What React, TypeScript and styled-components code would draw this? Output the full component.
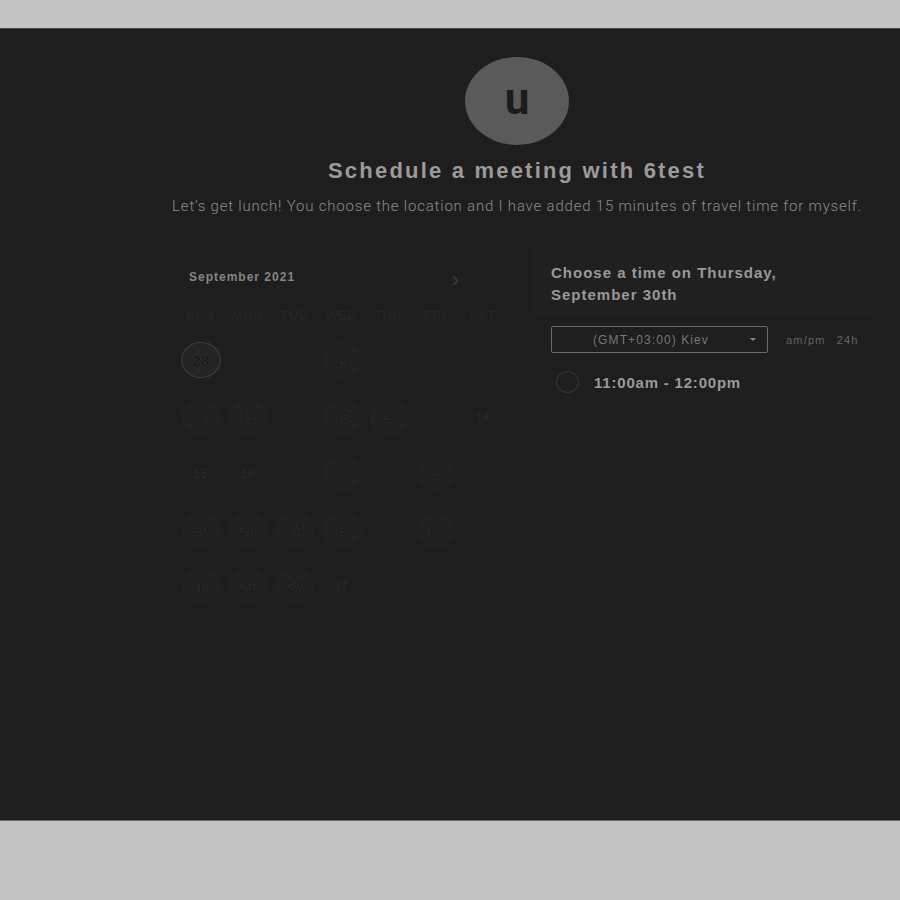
import React from 'react';
import styled, { createGlobalStyle } from 'styled-components';

type Day = { label: string; kind?: 'plain' | 'faint' | 'selected' };

const weekDays = ['SUN', 'MON', 'TUE', 'WED', 'THU', 'FRI', 'SAT'];

const d = (label: string, kind: Day['kind'] = 'plain'): Day => ({ label, kind });
const blank: Day = { label: '' };

const weeks: Day[][] = [
  [d('28', 'selected'), blank, blank, d('19'), blank, blank, blank],
  [d('3'), d('12'), blank, d('13'), d('9'), blank, d('14', 'faint')],
  [d('15', 'faint'), d('16', 'faint'), blank, d('8'), blank, d('5'), blank],
  [d('20'), d('28'), d('24'), d('6'), blank, d('18'), blank],
  [d('1'), d('21'), d('27'), d('17', 'faint'), blank, blank, blank]
];

const App: React.FC = () => {
  return (
    <>
      <GlobalStyle />
      <Panel>
        <Header>
          <Avatar>u</Avatar>
          <Title>Schedule a meeting with 6test</Title>
          <Description>
            Let’s get lunch! You choose the location and I have added 15 minutes of travel time for myself.
          </Description>
        </Header>

        <Columns>
          <Calendar>
            <MonthBar>
              <MonthName>September 2021</MonthName>
              <NavButtons>
                <NavArrow faint>‹</NavArrow>
                <NavArrow>›</NavArrow>
              </NavButtons>
            </MonthBar>
            <Grid>
              {weekDays.map(w => (
                <WeekDay key={w}>{w}</WeekDay>
              ))}
              {weeks.map((week, i) =>
                week.map((day, j) => (
                  <Cell key={`${i}-${j}`}>
                    {day.label && <DayButton kind={day.kind || 'plain'}>{day.label}</DayButton>}
                  </Cell>
                ))
              )}
            </Grid>
          </Calendar>

          <Times>
            <TimesHeader>
              Choose a time on Thursday,
              <br />
              September 30th
            </TimesHeader>
            <ZoneRow>
              <ZoneSelect>
                <span>(GMT+03:00) Kiev</span>
                <Caret />
              </ZoneSelect>
              <FormatToggle>
                <span>am/pm</span>
                <span>24h</span>
              </FormatToggle>
            </ZoneRow>
            <Slot>
              <Radio />
              <SlotText>11:00am - 12:00pm</SlotText>
            </Slot>
          </Times>
        </Columns>
      </Panel>
    </>
  );
};

export default App;

const GlobalStyle = createGlobalStyle`
  html, body {
    margin: 0;
    background: #c4c4c4;
  }
  body {
    padding-top: 28px;
    font-family: 'Liberation Sans', Arial, sans-serif;
  }
`;

const Panel = styled.div`
  height: 793px;
  box-sizing: border-box;
  background: #1e1e1e;
  border-top: 1px solid #4a4a4a;
  border-bottom: 1px solid #6a6a6a;
  padding-top: 28px;
`;

const Header = styled.div`
  display: flex;
  flex-direction: column;
  align-items: center;
  padding-left: 134px;
`;

const Avatar = styled.div`
  width: 104px;
  height: 88px;
  border-radius: 50%;
  background: #5a5a5a;
  color: #1c1c1c;
  font-family: Roboto, sans-serif;
  font-weight: 700;
  font-size: 44px;
  line-height: 84px;
  text-align: center;
`;

const Title = styled.h1`
  margin: 12px 0 0;
  font-family: 'Liberation Sans', Arial, sans-serif;
  font-weight: 700;
  font-size: 22px;
  line-height: 28px;
  letter-spacing: 2.2px;
  color: #9b9b9b;
`;

const Description = styled.p`
  margin: 11px 0 0;
  font-family: Roboto, sans-serif;
  font-weight: 300;
  font-size: 15px;
  line-height: 20px;
  letter-spacing: 0.8px;
  color: #8c8c8c;
  white-space: nowrap;
`;

const Columns = styled.div`
  display: flex;
  gap: 27px;
  padding: 30px 0 0 177px;
`;

const Calendar = styled.div`
  width: 329px;
  margin-top: 17px;
`;

const MonthBar = styled.div`
  display: flex;
  align-items: center;
  justify-content: space-between;
  height: 28px;
  padding-left: 12px;
`;

const MonthName = styled.div`
  font-size: 12px;
  font-weight: 700;
  letter-spacing: 1px;
  color: #858585;
`;

const NavButtons = styled.div`
  display: flex;
  gap: 72px;
  padding-right: 47px;
  padding-top: 6px;
`;

const NavArrow = styled.span<{ faint?: boolean }>`
  font-size: 22px;
  line-height: 20px;
  color: ${p => (p.faint ? '#232323' : '#3c3c3c')};
`;

const Grid = styled.div`
  display: grid;
  grid-template-columns: repeat(7, 47px);
  grid-template-rows: 24px repeat(5, 56.5px);
  margin-top: 13px;
`;

const WeekDay = styled.div`
  display: flex;
  align-items: center;
  justify-content: center;
  font-size: 12px;
  letter-spacing: 1px;
  color: #262626;
`;

const Cell = styled.div`
  display: flex;
  align-items: center;
  justify-content: center;
  padding-top: 8px;
`;

const DayButton = styled.div<{ kind: 'plain' | 'faint' | 'selected' }>`
  width: 40px;
  height: 36px;
  border-radius: 50%;
  display: flex;
  align-items: center;
  justify-content: center;
  box-sizing: border-box;
  font-size: ${p => (p.kind === 'faint' ? '13px' : '15px')};
  font-weight: ${p => (p.kind === 'faint' ? 400 : 700)};
  background: ${p => (p.kind === 'faint' ? 'transparent' : p.kind === 'selected' ? '#252525' : '#212121')};
  border: 1px solid ${p => (p.kind === 'selected' ? '#3e3e3e' : 'transparent')};
  color: ${p => (p.kind === 'faint' ? '#282828' : '#1a1a1a')};
  text-shadow: ${p => (p.kind === 'faint' ? 'none' : '0 0 1px #363636, 0 0 1px #363636')};
`;

const Times = styled.div`
  width: 340px;
`;

const TimesHeader = styled.div`
  background: #202020;
  padding: 16px 16px 10px 18px;
  font-size: 15px;
  font-weight: 700;
  line-height: 22px;
  letter-spacing: 1px;
  color: #9a9a9a;
`;

const ZoneRow = styled.div`
  display: flex;
  align-items: center;
  gap: 18px;
  margin-top: 10px;
  padding-left: 18px;
`;

const ZoneSelect = styled.div`
  width: 217px;
  height: 27px;
  box-sizing: border-box;
  border: 1px solid #6a6a6a;
  border-radius: 2px;
  display: flex;
  align-items: center;
  justify-content: space-between;
  padding: 0 11px 0 41px;
  font-size: 12px;
  letter-spacing: 1.1px;
  color: #777;
`;

const Caret = styled.span`
  width: 0;
  height: 0;
  border-left: 3px solid transparent;
  border-right: 3px solid transparent;
  border-top: 3px solid #8a8a8a;
`;

const FormatToggle = styled.div`
  display: flex;
  gap: 11px;
  font-size: 11px;
  letter-spacing: 1.2px;
  color: #666;
`;

const Slot = styled.div`
  display: flex;
  align-items: center;
  gap: 15px;
  margin-top: 18px;
  padding-left: 23px;
`;

const Radio = styled.div`
  width: 23px;
  height: 22px;
  box-sizing: border-box;
  border-radius: 50%;
  border: 1px solid #343434;
`;

const SlotText = styled.div`
  font-size: 15px;
  font-weight: 700;
  letter-spacing: 0.8px;
  color: #9a9a9a;
`;
